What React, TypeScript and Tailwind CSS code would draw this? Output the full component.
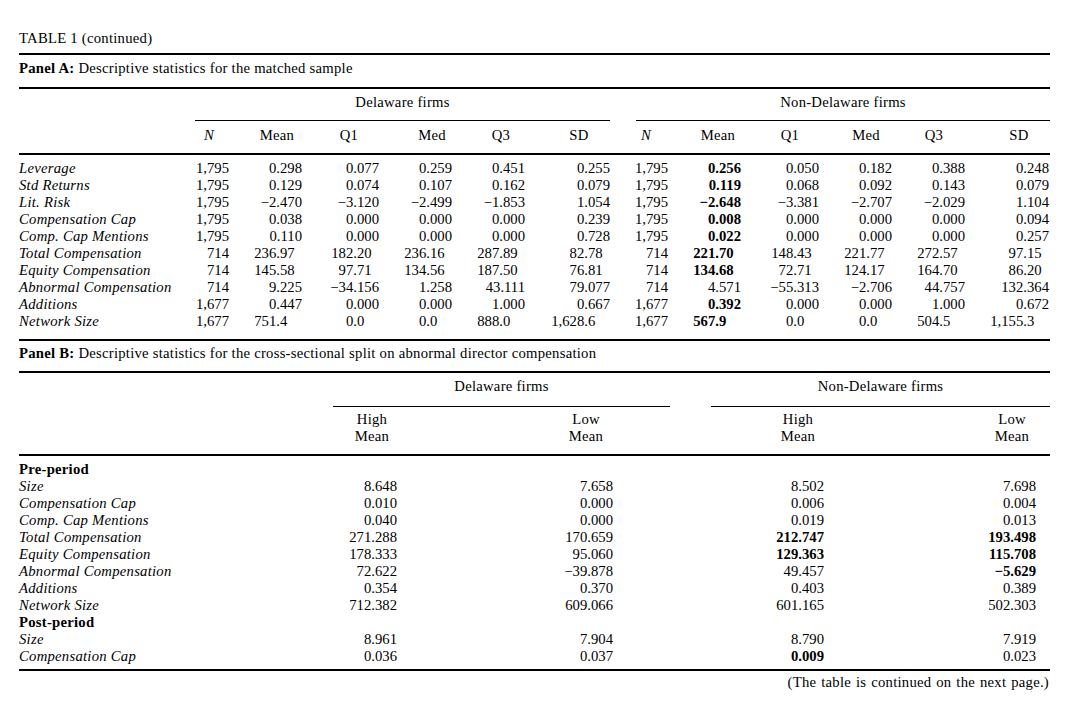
// Table 1 (continued) — descriptive statistics, typeset like a journal page.

const panelA: string[][] = [
  ["Leverage", "1,795", "0.298", "0.077", "0.259", "0.451", "0.255", "1,795", "*0.256", "0.050", "0.182", "0.388", "0.248"],
  ["Std Returns", "1,795", "0.129", "0.074", "0.107", "0.162", "0.079", "1,795", "*0.119", "0.068", "0.092", "0.143", "0.079"],
  ["Lit. Risk", "1,795", "−2.470", "−3.120", "−2.499", "−1.853", "1.054", "1,795", "*−2.648", "−3.381", "−2.707", "−2.029", "1.104"],
  ["Compensation Cap", "1,795", "0.038", "0.000", "0.000", "0.000", "0.239", "1,795", "*0.008", "0.000", "0.000", "0.000", "0.094"],
  ["Comp. Cap Mentions", "1,795", "0.110", "0.000", "0.000", "0.000", "0.728", "1,795", "*0.022", "0.000", "0.000", "0.000", "0.257"],
  ["Total Compensation", "714", "236.97", "182.20", "236.16", "287.89", "82.78", "714", "*221.70", "148.43", "221.77", "272.57", "97.15"],
  ["Equity Compensation", "714", "145.58", "97.71", "134.56", "187.50", "76.81", "714", "*134.68", "72.71", "124.17", "164.70", "86.20"],
  ["Abnormal Compensation", "714", "9.225", "−34.156", "1.258", "43.111", "79.077", "714", "4.571", "−55.313", "−2.706", "44.757", "132.364"],
  ["Additions", "1,677", "0.447", "0.000", "0.000", "1.000", "0.667", "1,677", "*0.392", "0.000", "0.000", "1.000", "0.672"],
  ["Network Size", "1,677", "751.4", "0.0", "0.0", "888.0", "1,628.6", "1,677", "*567.9", "0.0", "0.0", "504.5", "1,155.3"],
];

// cell widths so each column's decimal-aligned right edge lands where the page has it
const aWidths = [
  "w-[171px]", "w-[39px]", "w-[73px]", "w-[77px]", "w-[73px]", "w-[73px]", "w-[85px]",
  "w-[58px]", "w-[73px]", "w-[78px]", "w-[73px]", "w-[73px]", "w-[84px]",
];

const aHeads: [string, string][] = [
  ["N", "ml-0"], ["Mean", "ml-[28px]"], ["Q1", "ml-[32px]"], ["Med", "ml-[43px]"], ["Q3", "ml-[29px]"], ["SD", "ml-[38px]"],
  ["N", "ml-[27px]"], ["Mean", "ml-[32px]"], ["Q1", "ml-[32px]"], ["Med", "ml-[36px]"], ["Q3", "ml-[28px]"], ["SD", "ml-[45px]"],
];

type BRow = { label: string; vals?: string[]; head?: boolean };

const panelB: BRow[] = [
  { label: "Pre-period", head: true },
  { label: "Size", vals: ["8.648", "7.658", "8.502", "7.698"] },
  { label: "Compensation Cap", vals: ["0.010", "0.000", "0.006", "0.004"] },
  { label: "Comp. Cap Mentions", vals: ["0.040", "0.000", "0.019", "0.013"] },
  { label: "Total Compensation", vals: ["271.288", "170.659", "*212.747", "*193.498"] },
  { label: "Equity Compensation", vals: ["178.333", "95.060", "*129.363", "*115.708"] },
  { label: "Abnormal Compensation", vals: ["72.622", "−39.878", "49.457", "*−5.629"] },
  { label: "Additions", vals: ["0.354", "0.370", "0.403", "0.389"] },
  { label: "Network Size", vals: ["712.382", "609.066", "601.165", "502.303"] },
  { label: "Post-period", head: true },
  { label: "Size", vals: ["8.961", "7.904", "8.790", "7.919"] },
  { label: "Compensation Cap", vals: ["0.036", "0.037", "*0.009", "0.023"] },
];

const bWidths = ["w-[314px]", "w-[64px]", "w-[216px]", "w-[211px]", "w-[212px]"];

function Num({ raw, className }: { raw: string; className: string }) {
  const bold = raw.startsWith("*");
  const text = bold ? raw.slice(1) : raw;
  const dot = text.indexOf(".");
  const decimals = dot < 0 ? 3 : text.length - dot - 1;
  // decimal alignment: pad shorter fractions by whole digit widths
  const pad = decimals === 3 ? "pr-0" : decimals === 2 ? "pr-[1ch]" : "pr-[2ch]";
  return (
    <div className={`${className} shrink-0 text-right whitespace-nowrap tracking-normal ${pad} ${bold ? "font-bold" : ""}`}>
      {text}
    </div>
  );
}

function Rule({ className = "" }: { className?: string }) {
  return <div className={`h-[2px] bg-black ${className}`} />;
}

export default function App() {
  return (
    <div className="w-[1069px] h-[721px] bg-white text-black font-['Liberation_Serif',serif] text-[14.7px] leading-[17px] tracking-[0.25px]">
      <div className="ml-[19px] w-[1031px] pt-[29.5px]">
        <div>TABLE 1 (continued)</div>
        <Rule className="mt-[6.5px]" />

        <div className="pt-[4.5px] pb-[10.5px]">
          <span className="font-bold">Panel A:</span> Descriptive statistics for the matched sample
        </div>
        <Rule />

        <div className="flex">
          <div className="w-[176px] shrink-0" />
          <div className="w-[415px] shrink-0 pt-[4.5px] pb-[9.5px] border-b-[1.5px] border-black text-center">Delaware firms</div>
          <div className="w-[26px] shrink-0" />
          <div className="w-[414px] shrink-0 pt-[4.5px] pb-[9.5px] border-b-[1.5px] border-black text-center">Non-Delaware firms</div>
        </div>

        <div className="flex pt-[5.5px] pb-[9px]">
          <div className="w-[170px] shrink-0" />
          {aHeads.map(([h, ml], i) => (
            <div key={i} className={`w-[40px] shrink-0 text-center ${ml} ${h === "N" ? "italic" : ""}`}>{h}</div>
          ))}
        </div>
        <Rule />

        <div className="pt-[5px] pb-[9.5px]">
          {panelA.map((r) => (
            <div key={r[0]} className="flex">
              <div className={`${aWidths[0]} shrink-0 italic whitespace-nowrap`}>{r[0]}</div>
              {r.slice(1).map((v, i) => (
                <Num key={i} raw={v} className={aWidths[i + 1]} />
              ))}
            </div>
          ))}
        </div>
        <Rule />

        <div className="pt-[4px] pb-[9px]">
          <span className="font-bold">Panel B:</span> Descriptive statistics for the cross-sectional split on abnormal director compensation
        </div>
        <Rule />

        <div className="flex">
          <div className="w-[314px] shrink-0" />
          <div className="w-[337px] shrink-0 pt-[5px] pb-[10.5px] border-b-[1.5px] border-black text-center">Delaware firms</div>
          <div className="w-[41px] shrink-0" />
          <div className="w-[339px] shrink-0 pt-[5px] pb-[10.5px] border-b-[1.5px] border-black text-center">Non-Delaware firms</div>
        </div>

        <div className="flex pt-[4px] pb-[9px]">
          <div className="w-[323px] shrink-0" />
          <div className="w-[60px] shrink-0 text-center">High<br />Mean</div>
          <div className="w-[60px] shrink-0 text-center ml-[154px]">Low<br />Mean</div>
          <div className="w-[60px] shrink-0 text-center ml-[152px]">High<br />Mean</div>
          <div className="w-[60px] shrink-0 text-center ml-[154px]">Low<br />Mean</div>
        </div>
        <Rule />

        <div className="pt-[5px] pb-[4.5px]">
          {panelB.map((r, k) =>
            r.head ? (
              <div key={k} className="font-bold">{r.label}</div>
            ) : (
              <div key={k} className="flex">
                <div className={`${bWidths[0]} shrink-0 italic whitespace-nowrap`}>{r.label}</div>
                {r.vals!.map((v, i) => (
                  <Num key={i} raw={v} className={bWidths[i + 1]} />
                ))}
              </div>
            )
          )}
        </div>
        <Rule />

        <div className="pt-[3px] pr-[1px] text-right [word-spacing:1px]">(The table is continued on the next page.)</div>
      </div>
    </div>
  );
}
